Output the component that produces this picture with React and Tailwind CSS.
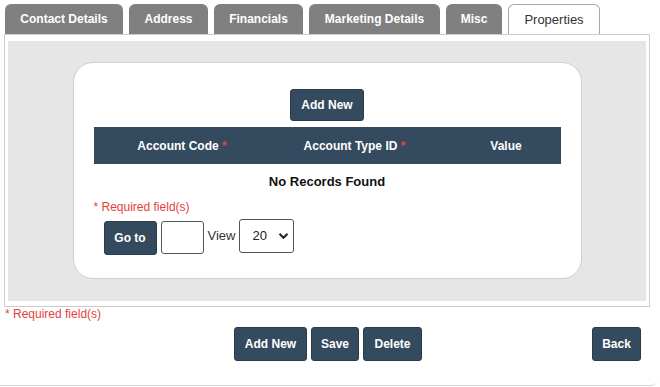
import React from "react";

const tabs = [
  { label: "Contact Details", w: "w-[118px]" },
  { label: "Address", w: "w-[79px]" },
  { label: "Financials", w: "w-[89px]" },
  { label: "Marketing Details", w: "w-[131px]" },
  { label: "Misc", w: "w-[56px]" },
];

function Btn({ children, className = "" }) {
  return (
    <button
      className={
        "bg-[#344a5e] border border-[#2a3b4b] rounded-[3px] text-white font-bold text-[12px] leading-none flex items-center justify-center " +
        className
      }
    >
      {children}
    </button>
  );
}

export default function App() {
  return (
    <div className="w-[660px] h-[387px] bg-white font-['Liberation_Sans',Arial,sans-serif] overflow-hidden">
      <div className="w-[657px] h-[386px] border-b border-[#d6d6d6] rounded-br-[6px]">
        {/* Tabs */}
        <div className="pt-[4px] pl-[5px] flex gap-[6px] h-[34px]">
          {tabs.map((t) => (
            <div
              key={t.label}
              className={
                t.w +
                " h-[30px] bg-[#808080] rounded-t-[6px] text-white font-bold text-[12px] flex items-center justify-center"
              }
            >
              {t.label}
            </div>
          ))}
          <div className="w-[92px] h-[30px] bg-white border border-b-0 border-[#a8a8a8] rounded-t-[6px] text-[#333] text-[13px] flex items-center justify-center">
            Properties
          </div>
        </div>

        {/* Panel */}
        <div className="ml-[4px] w-[646px] border border-[#cccccc] pt-[6px] px-[3px] pb-[5px]">
          <div className="bg-[#e6e6e6] pt-[21px] pb-[22px] flex justify-center">
            <div className="w-[509px] h-[217px] bg-white rounded-[20px] border border-[#cfcfcf] px-[20px] pt-[26px]">
              <div className="flex justify-center">
                <Btn className="w-[74px] h-[32px]">Add New</Btn>
              </div>
              <div className="mt-[6px] h-[37px] bg-[#344a5e] flex items-center text-white font-bold text-[12px]">
                <div className="w-[177px] text-center">
                  Account Code <span className="text-[#e0454a]">*</span>
                </div>
                <div className="w-[168px] text-center">
                  Account Type ID <span className="text-[#e0454a]">*</span>
                </div>
                <div className="flex-1 text-center pl-[13px]">Value</div>
              </div>
              <div className="h-[36px] flex items-center justify-center text-[13px] font-bold text-[#111]">
                No Records Found
              </div>
              <div className="text-[12px] leading-[14px] text-[#e53e3e]">* Required field(s)</div>
              <div className="mt-[5px] ml-[10px] flex items-start">
                <Btn className="mt-[2px] w-[53px] h-[34px]">Go to</Btn>
                <input
                  className="mt-[2px] ml-[4px] w-[43px] h-[33px] border border-[#555] rounded-[3px] outline-none"
                  type="text"
                />
                <span className="ml-[4px] mt-[10px] text-[13px] text-[#333] leading-none">View</span>
                <div className="ml-[4px] w-[55px] h-[34px] border border-[#555] rounded-[3px] flex items-center justify-between pl-[12px] pr-[4px]">
                  <span className="text-[13px] text-[#222]">20</span>
                  <svg width="11" height="8" viewBox="0 0 11 8">
                    <path d="M1.5 1.8 L5.5 5.8 L9.5 1.8" fill="none" stroke="#222" strokeWidth="2" />
                  </svg>
                </div>
              </div>
            </div>
          </div>
        </div>

        {/* Footer */}
        <div className="ml-[4px] w-[646px]">
          <div className="pl-[1px] text-[12px] leading-[14px] text-[#e53e3e]">* Required field(s)</div>
          <div className="mt-[6px] grid grid-cols-[1fr_auto_1fr] items-center">
            <div />
            <div className="flex gap-[4px] pl-[2px]">
              <Btn className="w-[73px] h-[34px]">Add New</Btn>
              <Btn className="w-[48px] h-[34px]">Save</Btn>
              <Btn className="w-[59px] h-[34px]">Delete</Btn>
            </div>
            <div className="flex justify-end pr-[9px]">
              <Btn className="w-[49px] h-[34px]">Back</Btn>
            </div>
          </div>
        </div>
      </div>
    </div>
  );
}
